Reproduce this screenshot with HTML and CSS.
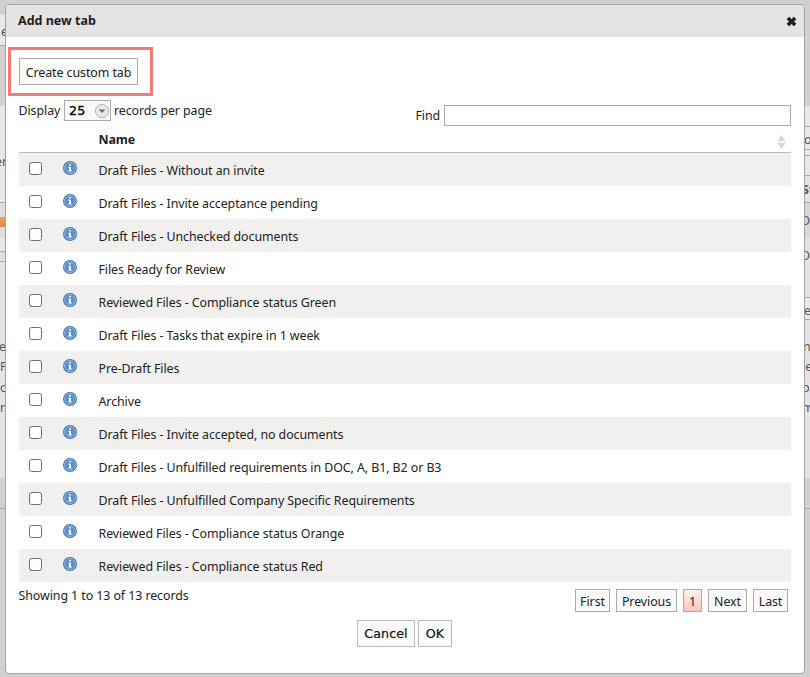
FILE: index.html
```
<!DOCTYPE html>
<html lang="en">
<head>
<meta charset="utf-8">
<title>Add new tab</title>
<link rel="stylesheet" href="styles.css">
</head>
<body>
<div class="page" aria-hidden="true">
  <div class="edge edge-left">
    <div class="seg dark h14"></div>
    <div class="seg light line h32 t-mid">e</div>
    <div class="seg dark h60"></div>
    <div class="seg light line h97 t-er">er</div>
    <div class="seg mid h14"></div>
    <div class="seg orange h10"></div>
    <div class="seg mid h11"></div>
    <div class="seg light line h14"></div>
    <div class="seg green line h10"></div>
    <div class="seg base h216 copy">e<br>P<br>o<br>n</div>
    <div class="seg dark line h31"></div>
    <div class="seg dark fill"></div>
  </div>
  <div class="edge edge-right">
    <div class="seg dark h106"></div>
    <div class="seg light line h21"></div>
    <div class="seg light line h23 t-cell">o</div>
    <div class="seg light line h6"></div>
    <div class="seg light line h20"></div>
    <div class="seg base line h27 t-bold">St</div>
    <div class="seg shade h35 t-d">D</div>
    <div class="seg base line h60 t-d">D</div>
    <div class="seg light line h22 t-cell">e</div>
    <div class="seg base h158 copy copy-right">nc<br>le<br>p<br>m</div>
    <div class="seg dark line h31"></div>
    <div class="seg dark fill"></div>
  </div>
</div>

<section class="dialog" role="dialog" aria-label="Add new tab">
  <header class="titlebar">
    <h1>Add new tab</h1>
    <svg class="close" viewBox="0 0 11 11"><path d="M1.9 1.9 9.1 9.1M9.1 1.9 1.9 9.1"/></svg>
  </header>
  <div class="body">
    <div class="create">
      <button class="btn btn-create">Create custom tab</button>
      <span class="highlight"></span>
    </div>
    <div class="controls">
      <div class="length">
        <span class="w-display">Display</span>
        <span class="select"><b>25</b>
          <svg viewBox="0 0 16 16"><circle cx="8" cy="8" r="6.6"/><path d="M4.7 6.5h6.6L8 10z"/></svg>
        </span>
        <span class="per-page">records per page</span>
      </div>
      <label class="find"><span>Find</span><input type="text"></label>
    </div>
    <div class="thead"><span>Name</span>
      <svg class="sort" viewBox="0 0 9 16"><path d="M4.5 1 8.5 7.3h-8zM.5 8.7h8l-4 6.5z"/></svg>
    </div>
    <div class="rows" id="rows"></div>
    <div class="foot">
      <span class="info">Showing 1 to 13 of 13 records</span>
      <nav class="pager">
        <button class="btn p-first">First</button><button class="btn p-prev">Previous</button><button class="btn p-one">1</button><button class="btn p-next">Next</button><button class="btn p-last">Last</button>
      </nav>
    </div>
    <div class="actions"><button class="btn act cancel">Cancel</button><button class="btn act ok">OK</button></div>
  </div>
</section>
<script src="rows.js"></script>
</body>
</html>
```
FILE: styles.css
```
* { box-sizing: border-box; }
body { margin: 0; width: 810px; height: 677px; overflow: hidden; position: relative; font: 12.4px/18px "Noto Sans", sans-serif; letter-spacing: -0.07px; color: #222; background: #d2d0d1; }
.page { display: flex; justify-content: space-between; height: 677px; color: #555; }
.edge { width: 20px; display: flex; flex-direction: column; overflow: hidden; }
.edge-right { width: 8px; }
.seg { flex: none; white-space: nowrap; }
.fill { flex: 1; }
.dark { background: #d2d0d1; }
.light { background: #e9e8e8; }
.base { background: #e5e4e4; }
.mid { background: #dfdedd; }
.shade { background: #d9d8d8; }
.green { background: #dfe3d9; }
.orange { background: linear-gradient(#f2a15c, #d98a45); }
.line { border-bottom: 1px solid #aaa; }
.h6 { height: 6px; } .h10 { height: 10px; } .h11 { height: 11px; } .h14 { height: 14px; }
.h20 { height: 20px; } .h21 { height: 21px; } .h22 { height: 22px; } .h23 { height: 23px; }
.h27 { height: 27px; } .h31 { height: 31px; } .h32 { height: 32px; } .h35 { height: 35px; }
.h60 { height: 60px; } .h97 { height: 97px; } .h106 { height: 106px; } .h158 { height: 158px; } .h216 { height: 216px; }
.t-mid { padding-top: 9px; text-indent: 1px; }
.t-er { padding-top: 47px; text-indent: -5px; }
.t-cell { padding-top: 4px; text-indent: 2px; }
.t-bold { padding-top: 5px; text-indent: 0; font-weight: 700; }
.t-d { padding-top: 9px; text-indent: -1px; }
.copy { padding-top: 75px; line-height: 20.3px; text-indent: -1px; }
.copy-right { padding-top: 17px; text-indent: 1px; }
.dialog { position: absolute; left: 5px; top: 4px; width: 800px; height: 670px; border: 1px solid #a3a3a3; border-radius: 4px; background: #fff; overflow: hidden; }
.titlebar { height: 32px; padding: 0 7px 0 12px; display: flex; align-items: center; justify-content: space-between; background: #e5e3e4; }
h1 { margin: 0; font-size: 12.5px; line-height: 18px; font-weight: 700; letter-spacing: 0; }
.close { width: 11px; height: 11px; margin-top: 1px; stroke: #222; stroke-width: 3.6; }
.body { padding: 21px 13px 0 13px; }
.btn { font: inherit; letter-spacing: inherit; color: #222; background: #fafafa; border: 1px solid #aaa; padding: 2px 0 0; white-space: nowrap; }
.create { position: relative; height: 27px; }
.btn-create { display: block; width: 119px; height: 27px; }
.highlight { position: absolute; left: -11px; top: -11px; width: 145px; height: 49px; border: 3px solid #f47a74; }
.controls { display: flex; justify-content: space-between; height: 46px; padding-top: 15px; }
.length { display: flex; height: 21px; line-height: 22px; }
.w-display { width: 45px; text-indent: -.5px; }
.select { width: 47px; height: 21px; margin-right: 3px; border: 1px solid #aaa; background: #fafafa; display: flex; align-items: center; justify-content: space-between; padding: 0 0 0 4px; color: #111; }
.select b { font: 400 12.6px/18px "DejaVu Sans", sans-serif; letter-spacing: .2px; -webkit-text-stroke: .45px #111; }
.select svg { width: 16px; height: 16px; fill: #e8e8e8; stroke: #b5b5b5; }
.select path { fill: #666; stroke: none; }
.find { display: flex; padding-top: 5px; line-height: 22px; }
.find span { width: 28.5px; }
.find input { width: 347px; height: 21px; border: 1px solid #aaa; padding: 0; margin: 0; background: #fff; }
.thead { height: 22px; display: flex; justify-content: space-between; padding: 0 5px 0 79.5px; border-bottom: 1px solid #bbb; font-weight: 700; line-height: 18px; }
.sort { width: 9px; height: 16px; margin-top: 3px; fill: #d6d6d6; }
.row { height: 33px; display: grid; grid-template-columns: 44px 35.5px 1fr; }
.row:nth-child(odd) { background: #f1f0ef; }
.row input { appearance: none; width: 13px; height: 13px; margin: 9px 0 0 10px; border: 1px solid #707070; border-radius: 2.5px; background: #fff; }
.row svg { width: 14px; height: 14px; margin-top: 8px; }
.row span { line-height: 18px; padding-top: 9px; white-space: nowrap; }
.foot { display: flex; justify-content: space-between; height: 38px; }
.info { padding-top: 5px; text-indent: -.5px; }
.pager { display: flex; gap: 6px; padding: 7px 3px 0 0; }
.pager .btn { height: 23px; }
.p-first { width: 35px; } .p-prev { width: 61px; } .p-next { width: 39px; } .p-last { width: 35px; }
.pager .p-one { width: 19px; background: linear-gradient(#fff1ef, #fbc4bd); }
.actions { display: flex; gap: 3px; padding-left: 338px; }
.act { height: 27px; padding: 0; font: 12.6px/20px "DejaVu Sans", sans-serif; letter-spacing: .1px; color: #111; border-color: #bbb; -webkit-text-stroke: .2px #111; }
.cancel { width: 58px; } .ok { width: 34px; }
```
FILE: rows.js
```
const names = [
  "Draft Files - Without an invite",
  "Draft Files - Invite acceptance pending",
  "Draft Files - Unchecked documents",
  "Files Ready for Review",
  "Reviewed Files - Compliance status Green",
  "Draft Files - Tasks that expire in 1 week",
  "Pre-Draft Files",
  "Archive",
  "Draft Files - Invite accepted, no documents",
  "Draft Files - Unfulfilled requirements in DOC, A, B1, B2 or B3",
  "Draft Files - Unfulfilled Company Specific Requirements",
  "Reviewed Files - Compliance status Orange",
  "Reviewed Files - Compliance status Red"
];
const icon = '<svg viewBox="0 0 14 14"><circle cx="7" cy="7" r="7" fill="#4474b2"/><circle cx="7" cy="7" r="5.5" fill="#5c8ec8" stroke="#a9c4e4" stroke-width=".8"/><path d="M6.1 3h1.8v1.6H6.1zM5.3 5.7h2.6v3.9h.9v1H5.2v-1h.9V6.7h-.8z" fill="#fff"/></svg>';
document.getElementById("rows").innerHTML = names.map(n =>
  `<div class="row"><input type="checkbox" aria-label="${n}">${icon}<span>${n}</span></div>`).join("");
```
